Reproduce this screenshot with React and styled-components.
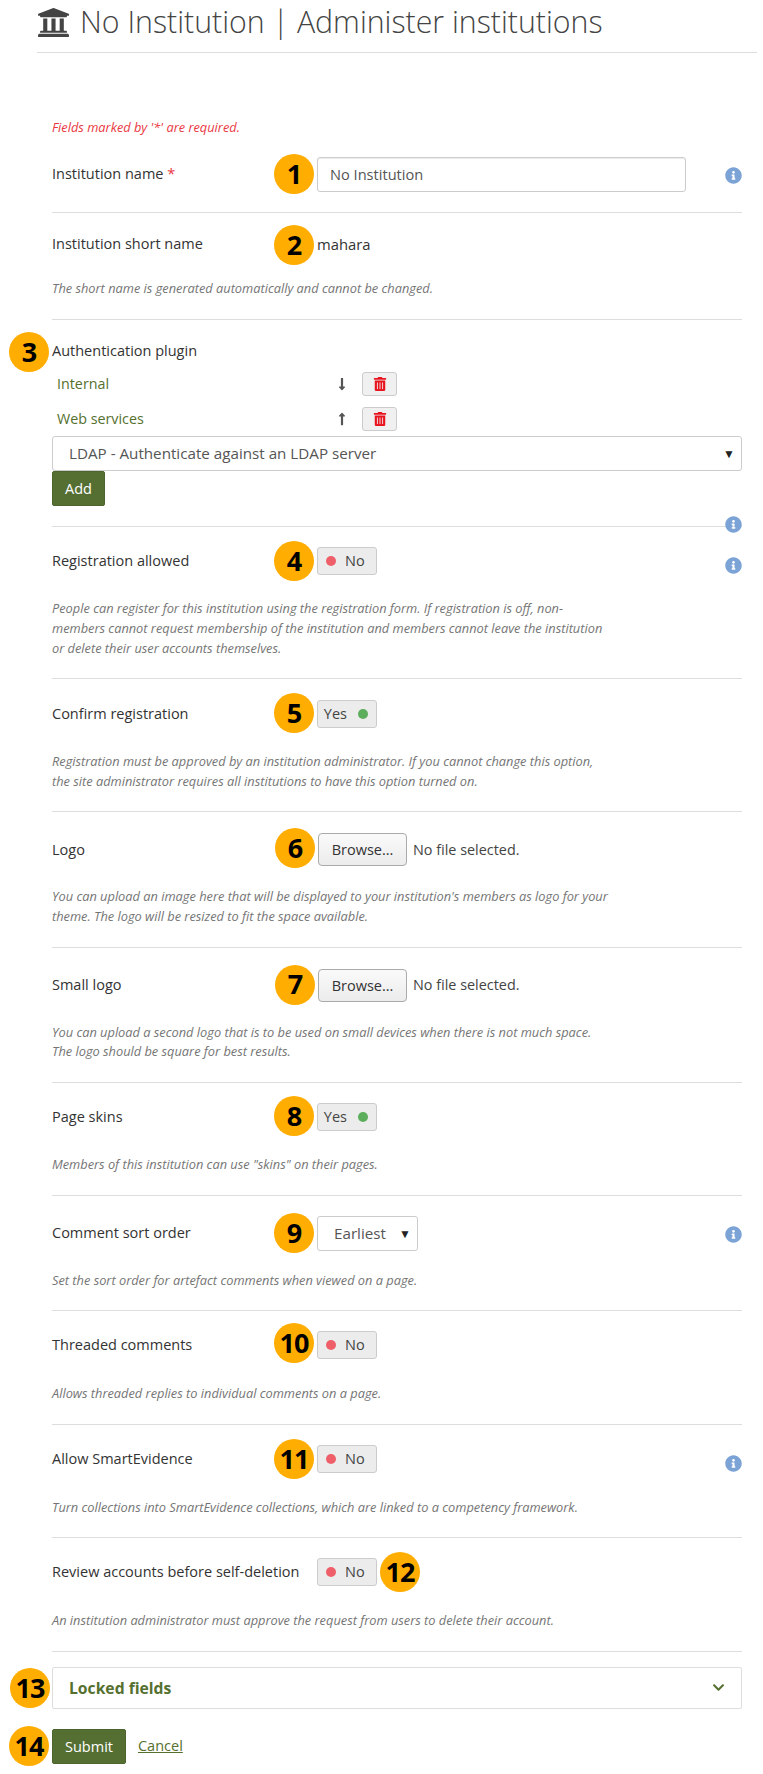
import styled, { createGlobalStyle } from "styled-components"
import { FaUniversity, FaInfoCircle, FaTrashAlt, FaLongArrowAltDown, FaLongArrowAltUp, FaChevronDown } from "react-icons/fa"

const Global = createGlobalStyle`
    html, body {
        margin: 0;
        padding: 0;
        background: #fff;
    }
    body {
        font-family: "Open Sans", "Liberation Sans", sans-serif;
        font-size: 14.5px;
        line-height: 20.4px;
        color: #333;
    }
`
const Page = styled.div`
    width: 763px;
    height: 1774px;
    box-sizing: border-box;
    overflow: hidden;
    padding: 0 6px 0 37px;
`
const Title = styled.h1`
    display: flex;
    align-items: center;
    gap: 10px;
    height: 53px;
    margin: 0;
    box-sizing: border-box;
    padding-bottom: 8px;
    border-bottom: 1px solid #ddd;
    font-size: 30.3px;
    font-weight: 300;
    color: #444;
    white-space: nowrap;
`
const Form = styled.div`
    width: 690px;
    margin-left: 15px;
`
const Required = styled.p`
    margin: 0;
    padding-top: 64px;
    height: 20px;
    line-height: 20px;
    font-size: 12.8px;
    font-style: italic;
    color: #e9383f;
`
const Row = styled.section`
    position: relative;
    border-bottom: 1px solid #ddd;
    padding-top: ${(p) => p.$top ?? 20}px;
    padding-bottom: 20px;
`
const Line = styled.div`
    display: flex;
    align-items: center;
`
const Label = styled.label`
    display: block;
    flex: 0 0 265px;
    color: #333;
`
const Star = styled.span`
    color: #e9383f;
`
const TextInput = styled.div`
    box-sizing: border-box;
    width: 369px;
    height: 35px;
    padding: 0 12px;
    line-height: 33px;
    font-size: 14.6px;
    border: 1px solid #ccc;
    border-radius: 3px;
    box-shadow: inset 0 1px 1px rgba(0, 0, 0, 0.08);
    color: #555;
`
const Value = styled.span`
    font-size: 14.8px;
`
const Help = styled.p`
    margin: ${(p) => p.$gap ?? 25}px 0 0;
    max-width: 556px;
    font-size: 12.8px;
    line-height: 19.6px;
    font-style: italic;
    color: #757575;
`
const Badge = styled.span`
    position: absolute;
    left: ${(p) => p.$x}px;
    top: ${(p) => p.$y}px;
    width: 40px;
    height: 40px;
    border-radius: 50%;
    background: #ffad00;
    color: #000;
    display: flex;
    align-items: center;
    justify-content: center;
    font-size: 27px;
    font-weight: 700;
    letter-spacing: -1px;
`
const Info = styled(FaInfoCircle)`
    position: absolute;
    right: 0;
    top: ${(p) => p.$y}px;
    font-size: 17px;
    color: #7ba3d6;
`
const PluginRow = styled.div`
    display: flex;
    align-items: center;
    height: 24px;
    margin-top: 11px;
    padding-left: 5px;
`
const PluginName = styled.span`
    flex: 0 0 278px;
    font-size: 14.3px;
    color: #55702f;
`
const Arrow = styled.span`
    flex: 0 0 27px;
    display: flex;
    font-size: 14px;
    color: #555;
`
const IconButton = styled.button`
    box-sizing: border-box;
    width: 35px;
    height: 24px;
    padding: 0;
    display: flex;
    align-items: center;
    justify-content: center;
    background: #f0f0f0;
    border: 1px solid #ccc;
    border-radius: 3px;
    color: #e8151f;
    font-size: 14px;
`
const SelectBox = styled.div`
    position: relative;
    box-sizing: border-box;
    width: ${(p) => p.$width};
    height: 35px;
    margin-top: ${(p) => p.$top ?? 0}px;
    padding-left: ${(p) => p.$pad}px;
    line-height: 33px;
    font-size: 15.2px;
    border: 1px solid #ccc;
    border-radius: 3px;
    color: #555;
    background: #fff;
    &::after {
        content: "▼";
        position: absolute;
        right: 6px;
        top: 0;
        font-size: 12px;
        color: #222;
    }
`
const PrimaryButton = styled.button`
    display: block;
    box-sizing: border-box;
    height: 35px;
    padding: 0 12px;
    background: #556f33;
    border: 1px solid #4c642d;
    border-radius: 2px;
    color: #fff;
    font-family: inherit;
    font-size: 14.5px;
`
const Toggle = styled.div`
    box-sizing: border-box;
    width: 60px;
    height: 28px;
    display: flex;
    align-items: center;
    flex-direction: ${(p) => (p.$on ? "row-reverse" : "row")};
    justify-content: flex-start;
    gap: ${(p) => (p.$on ? 11 : 9)}px;
    padding: 0 8px;
    background: #ececec;
    border: 1px solid #ccc;
    border-radius: 3px;
    color: #444;
    font-size: 14.5px;
    &::before {
        content: "";
        flex-shrink: 0;
        width: 10px;
        height: 10px;
        border-radius: 50%;
        background: ${(p) => (p.$on ? "#5cad5c" : "#ee5f6a")};
    }
`
const Browse = styled.button`
    box-sizing: border-box;
    width: 89px;
    height: 33px;
    margin-left: 1px;
    background: linear-gradient(#fafafa, #ececec);
    border: 1px solid #aaa;
    border-radius: 4px;
    color: #333;
    font-family: inherit;
    font-size: 14.5px;
`
const NoFile = styled.span`
    margin-left: 6px;
    font-size: 14.4px;
    color: #444;
`
const Collapsible = styled.div`
    position: relative;
    box-sizing: border-box;
    display: flex;
    align-items: center;
    justify-content: space-between;
    height: 42px;
    margin-top: 15px;
    padding: 0 16px;
    border: 1px solid #ddd;
    border-radius: 2px;
    font-size: 15.7px;
    font-weight: 700;
    color: #55702f;
`
const Actions = styled.div`
    position: relative;
    display: flex;
    align-items: center;
    gap: 12px;
    margin-top: 20px;
`
const CancelLink = styled.a`
    font-size: 14.5px;
    color: #55702f;
    text-decoration: underline;
`

function ToggleField({ on }) {
    return <Toggle $on={on}>{on ? "Yes" : "No"}</Toggle>
}

const App = () => {
    return (
        <Page>
            <Global />
            <Title><FaUniversity size={33} />No Institution | Administer institutions</Title>
            <Form>
                <Required>Fields marked by '*' are required.</Required>
                <Row $top={20}>
                    <Line>
                        <Label>Institution name <Star>*</Star></Label>
                        <TextInput>No Institution</TextInput>
                    </Line>
                    <Badge $x={222} $y={17}>1</Badge>
                    <Info $y={30} />
                </Row>
                <Row $top={21}>
                    <Line>
                        <Label>Institution short name</Label>
                        <Value>mahara</Value>
                    </Line>
                    <Badge $x={222} $y={12}>2</Badge>
                    <Help>The short name is generated automatically and cannot be changed.</Help>
                </Row>
                <Row $top={21}>
                    <Label>Authentication plugin</Label>
                    <Badge $x={-43} $y={12}>3</Badge>
                    <PluginRow>
                        <PluginName>Internal</PluginName>
                        <Arrow><FaLongArrowAltDown /></Arrow>
                        <IconButton><FaTrashAlt /></IconButton>
                    </PluginRow>
                    <PluginRow>
                        <PluginName>Web services</PluginName>
                        <Arrow><FaLongArrowAltUp /></Arrow>
                        <IconButton><FaTrashAlt /></IconButton>
                    </PluginRow>
                    <SelectBox $width="100%" $pad={16} $top={5}>LDAP - Authenticate against an LDAP server</SelectBox>
                    <PrimaryButton>Add</PrimaryButton>
                    <Info $y={196} />
                </Row>
                <Row>
                    <Line>
                        <Label>Registration allowed</Label>
                        <ToggleField />
                    </Line>
                    <Badge $x={222} $y={14}>4</Badge>
                    <Info $y={30} />
                    <Help $gap={24}>People can register for this institution using the registration form. If registration is off, non-members cannot request membership of the institution and members cannot leave the institution or delete their user accounts themselves.</Help>
                </Row>
                <Row $top={21}>
                    <Line>
                        <Label>Confirm registration</Label>
                        <ToggleField on />
                    </Line>
                    <Badge $x={222} $y={14}>5</Badge>
                    <Help $gap={24}>Registration must be approved by an institution administrator. If you cannot change this option, the site administrator requires all institutions to have this option turned on.</Help>
                </Row>
                <Row $top={21}>
                    <Line>
                        <Label>Logo</Label>
                        <Browse>Browse...</Browse>
                        <NoFile>No file selected.</NoFile>
                    </Line>
                    <Badge $x={223} $y={16}>6</Badge>
                    <Help $gap={21}>You can upload an image here that will be displayed to your institution's members as logo for your theme. The logo will be resized to fit the space available.</Help>
                </Row>
                <Row $top={21}>
                    <Line>
                        <Label>Small logo</Label>
                        <Browse>Browse...</Browse>
                        <NoFile>No file selected.</NoFile>
                    </Line>
                    <Badge $x={223} $y={17}>7</Badge>
                    <Help $gap={21}>You can upload a second logo that is to be used on small devices when there is not much space. The logo should be square for best results.</Help>
                </Row>
                <Row>
                    <Line>
                        <Label>Page skins</Label>
                        <ToggleField on />
                    </Line>
                    <Badge $x={222} $y={13}>8</Badge>
                    <Help $gap={24.6}>Members of this institution can use "skins" on their pages.</Help>
                </Row>
                <Row>
                    <Line>
                        <Label>Comment sort order</Label>
                        <SelectBox $width="101px" $pad={16}>Earliest</SelectBox>
                    </Line>
                    <Badge $x={222} $y={17}>9</Badge>
                    <Info $y={30} />
                    <Help $gap={19.6}>Set the sort order for artefact comments when viewed on a page.</Help>
                </Row>
                <Row>
                    <Line>
                        <Label>Threaded comments</Label>
                        <ToggleField />
                    </Line>
                    <Badge $x={222} $y={12}>10</Badge>
                    <Help>Allows threaded replies to individual comments on a page.</Help>
                </Row>
                <Row>
                    <Line>
                        <Label>Allow SmartEvidence</Label>
                        <ToggleField />
                    </Line>
                    <Badge $x={222} $y={14}>11</Badge>
                    <Info $y={30} />
                    <Help>Turn collections into SmartEvidence collections, which are linked to a competency framework.</Help>
                </Row>
                <Row>
                    <Line>
                        <Label>Review accounts before self-deletion</Label>
                        <ToggleField />
                    </Line>
                    <Badge $x={328} $y={14}>12</Badge>
                    <Help>An institution administrator must approve the request from users to delete their account.</Help>
                </Row>
                <Collapsible>
                    Locked fields
                    <FaChevronDown size={13} />
                    <Badge $x={-43} $y={0}>13</Badge>
                </Collapsible>
                <Actions>
                    <PrimaryButton>Submit</PrimaryButton>
                    <CancelLink>Cancel</CancelLink>
                    <Badge $x={-43} $y={-3}>14</Badge>
                </Actions>
            </Form>
        </Page>
    )
}
export default App
